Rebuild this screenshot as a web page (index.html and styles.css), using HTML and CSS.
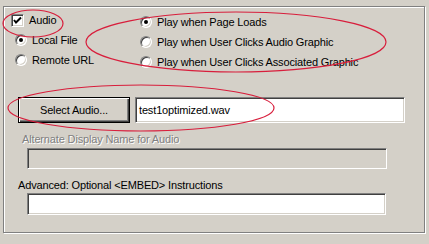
FILE: index.html
```html
<!DOCTYPE html>
<html lang="en">
<head>
  <meta charset="UTF-8" />
  <title>Audio Properties</title>
  <link rel="stylesheet" href="styles.css">
</head>
<body>

  <div class="frame">
    <div class="options">
      <div class="source">
        <div class="row">
          <span class="check"><svg width="9" height="9" viewBox="0 0 9 9"><path d="M1 4 L3 6.5 L8 1.5" fill="none" stroke="#000" stroke-width="2"/></svg></span>
          <span class="label">Audio</span>
        </div>
        <div class="row indent">
          <span class="radio on"></span>
          <span class="label">Local File</span>
        </div>
        <div class="row indent">
          <span class="radio"></span>
          <span class="label">Remote URL</span>
        </div>
      </div>
      <div class="play">
        <div class="row">
          <span class="radio on"></span>
          <span class="label">Play when Page Loads</span>
        </div>
        <div class="row">
          <span class="radio"></span>
          <span class="label">Play when User Clicks Audio Graphic</span>
        </div>
        <div class="row">
          <span class="radio"></span>
          <span class="label">Play when User Clicks Associated Graphic</span>
        </div>
      </div>
    </div>

    <div class="file-row">
      <button class="btn">Select Audio...</button>
      <div class="field file">test1optimized.wav</div>
    </div>

    <div class="caption disabled">Alternate Display Name for Audio</div>
    <div class="field wide off"></div>

    <div class="caption">Advanced: Optional &lt;EMBED&gt; Instructions</div>
    <div class="field wide embed"></div>
  </div>

  <svg class="marks" width="429" height="244" viewBox="0 0 429 244">
    <ellipse cx="33" cy="23.5" rx="30" ry="13.5" />
    <ellipse cx="236" cy="42" rx="150" ry="30" />
    <ellipse cx="141" cy="108" rx="133" ry="23" />
  </svg>

</body>
</html>
```

FILE: styles.css
```css
body {
  margin: 0;
  width: 429px;
  height: 244px;
  overflow: hidden;
  background-color: #d4d0c8;
  font-family: "Liberation Sans", Arial, sans-serif;
  font-size: 11px;
  letter-spacing: -0.15px;
  color: #000;
  position: relative;
}
.frame {
  box-sizing: border-box;
  margin: 6px 0 0 3px;
  width: 422px;
  height: 227px;
  border: 1px solid #808080;
  box-shadow: inset 1px 1px 0 #fff, 1px 1px 0 #fff;
  padding: 3px 0 0 7px;
}
.options {
  display: flex;
}
.source {
  width: 129px;
}
.play {
  margin-top: 2px;
}
.row {
  display: flex;
  align-items: center;
  height: 20px;
}
.indent {
  padding-left: 4px;
}
.label {
  margin-left: 5px;
  white-space: nowrap;
}
.check {
  box-sizing: border-box;
  width: 13px;
  height: 13px;
  background: #fff;
  border: 1px solid;
  border-color: #808080 #fff #fff #808080;
  box-shadow: inset 1px 1px 0 #404040, inset -1px -1px 0 #d4d0c8;
  display: flex;
  align-items: center;
  justify-content: center;
}
.radio {
  box-sizing: border-box;
  width: 12px;
  height: 12px;
  border-radius: 50%;
  background: #fff;
  border: 1px solid;
  border-color: #808080 #fff #fff #808080;
  box-shadow: inset 1px 1px 0 #404040, inset -1px -1px 0 #d4d0c8;
  position: relative;
}
.radio.on::after {
  content: "";
  position: absolute;
  left: 3px;
  top: 3px;
  width: 4px;
  height: 4px;
  border-radius: 50%;
  background: #000;
}
.file-row {
  display: flex;
  gap: 5px;
  margin: 25px 0 0 7px;
}
.btn {
  box-sizing: border-box;
  width: 112px;
  height: 26px;
  font-family: inherit;
  font-size: 11px;
  letter-spacing: inherit;
  color: #000;
  background: #d4d0c8;
  border: 1px solid #000;
  box-shadow: inset 1px 1px 0 #fff, inset -1px -1px 0 #404040, inset -2px -2px 0 #808080;
  padding: 0;
}
.field {
  box-sizing: border-box;
  background: #fff;
  border: 1px solid;
  border-color: #808080 #fff #fff #808080;
  box-shadow: inset 1px 1px 0 #404040, inset -1px -1px 0 #d4d0c8;
}
.file {
  width: 270px;
  height: 26px;
  line-height: 24px;
  padding-left: 3px;
}
.caption {
  margin: 10px 0 0 7px;
  line-height: 13px;
}
.caption.disabled {
  margin-left: 11px;
  color: #808080;
  text-shadow: 1px 1px 0 #fff;
}
.wide {
  margin: 2px 0 0 16px;
  width: 360px;
  height: 21px;
}
.off {
  background: #d4d0c8;
}
.embed {
  height: 22px;
  width: 359px;
  margin-top: 1px;
}
.marks {
  position: absolute;
  left: 0;
  top: 0;
  pointer-events: none;
}
.marks ellipse {
  fill: none;
  stroke: #d81e3c;
  stroke-width: 1.2;
}
```
